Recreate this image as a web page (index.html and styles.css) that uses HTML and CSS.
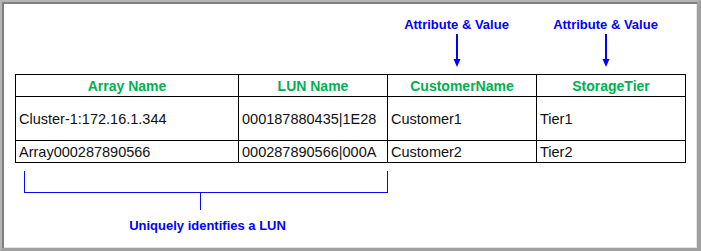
FILE: index.html
```html
<!DOCTYPE html>
<html>
<head>
<meta charset="utf-8">
<link rel="stylesheet" href="styles.css">
</head>
<body>
<div class="frame">
  <div class="annotations">
    <div class="note note-c3">
      <span class="note-text">Attribute &amp; Value</span>
      <svg class="arrow" width="12" height="35" viewBox="0 0 12 35"><line x1="6" y1="2" x2="6" y2="29" stroke="#0000ff" stroke-width="2"/><polygon points="2.5,27 9.5,27 6,35" fill="#0000ff"/></svg>
    </div>
    <div class="note note-c4">
      <span class="note-text">Attribute &amp; Value</span>
      <svg class="arrow" width="12" height="35" viewBox="0 0 12 35"><line x1="6" y1="2" x2="6" y2="29" stroke="#0000ff" stroke-width="2"/><polygon points="2.5,27 9.5,27 6,35" fill="#0000ff"/></svg>
    </div>
  </div>
  <table class="grid">
    <colgroup>
      <col class="c1"><col class="c2"><col class="c3"><col class="c4">
    </colgroup>
    <tr class="head">
      <th>Array Name</th><th>LUN Name</th><th>CustomerName</th><th>StorageTier</th>
    </tr>
    <tr class="tall">
      <td>Cluster-1:172.16.1.344</td><td>000187880435|1E28</td><td>Customer1</td><td>Tier1</td>
    </tr>
    <tr class="short">
      <td>Array000287890566</td><td>000287890566|000A</td><td>Customer2</td><td>Tier2</td>
    </tr>
  </table>
  <div class="bracket-area">
    <div class="bracket"></div>
    <div class="tick"></div>
    <div class="bracket-label">Uniquely identifies a LUN</div>
  </div>
</div>
</body>
</html>
```
FILE: styles.css
```css
html, body {
  margin: 0;
  padding: 0;
  background: #ffffff;
}

.frame {
  width: 701px;
  height: 251px;
  box-sizing: border-box;
  border-style: solid;
  border-width: 2px 4px 3px 2px;
  border-color: #b4b4b4 #a0a0a0 #a0a0a0 #b4b4b4;
  box-shadow: inset 2px 2px 0 #808080, inset -1px -1px 0 #e4e4e4;
  background: #ffffff;
  padding: 15px 0 0 13px;
  font-family: "Liberation Sans", Arial, sans-serif;
}

.annotations {
  display: grid;
  grid-template-columns: 223px 149px 149px 149px;
  height: 50px;
  margin-bottom: 7px;
}

.note {
  display: flex;
  flex-direction: column;
  align-items: center;
  margin-right: 10px;
}

.note-c3 { grid-column: 3; }
.note-c4 { grid-column: 4; }

.note-text {
  color: #0000ff;
  font-weight: bold;
  font-size: 13px;
  line-height: 15px;
  white-space: nowrap;
}

.arrow {
  display: block;
}

.grid {
  border-collapse: collapse;
  table-layout: fixed;
  width: 670px;
}

.c1 { width: 223px; }
.c2 { width: 149px; }
.c3 { width: 149px; }
.c4 { width: 149px; }

.grid th,
.grid td {
  border: 1px solid #000000;
  padding: 0 0 0 3px;
  white-space: nowrap;
  overflow: hidden;
}

.grid th {
  color: #00b050;
  font-weight: bold;
  font-size: 14px;
  text-align: center;
  padding: 0;
}

.grid td {
  color: #111111;
  font-size: 14.5px;
  text-align: left;
}

.head { height: 22px; }
.tall { height: 44px; }
.short { height: 22px; }

.bracket-area {
  width: 372px;
  margin-top: 8px;
}

.bracket {
  margin-left: 9px;
  width: 362px;
  height: 21px;
  box-sizing: content-box;
  border: 1px solid #0a0af0;
  border-top: none;
}

.tick {
  margin-left: 185px;
  width: 1px;
  height: 17px;
  background: #0a0af0;
}

.bracket-label {
  margin-top: 8px;
  padding-left: 13px;
  text-align: center;
  color: #0000ff;
  font-weight: bold;
  font-size: 13px;
  line-height: 15px;
  white-space: nowrap;
}
```
